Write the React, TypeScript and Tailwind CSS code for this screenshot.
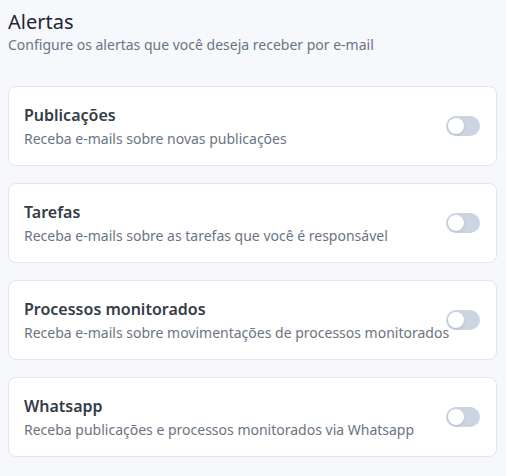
import { useState } from 'react';

interface Alert {
  id: string;
  title: string;
  description: string;
}

const alerts: Alert[] = [
  { id: 'publicacoes', title: 'Publicações', description: 'Receba e-mails sobre novas publicações' },
  { id: 'tarefas', title: 'Tarefas', description: 'Receba e-mails sobre as tarefas que você é responsável' },
  { id: 'processos', title: 'Processos monitorados', description: 'Receba e-mails sobre movimentações de processos monitorados' },
  { id: 'whatsapp', title: 'Whatsapp', description: 'Receba publicações e processos monitorados via Whatsapp' },
];

function Toggle({ checked, onChange }: { checked: boolean; onChange: () => void }) {
  return (
    <button
      type="button"
      onClick={onChange}
      className={`relative z-10 flex h-5 w-[34px] shrink-0 items-center rounded-full ${checked ? 'bg-[#3b82f6]' : 'bg-[#cbd5e1]'}`}
    >
      <span
        className={`h-4 w-4 rounded-full bg-white shadow-sm ${checked ? 'ml-4' : 'ml-[2px]'}`}
      />
    </button>
  );
}

export default function App() {
  const [enabled, setEnabled] = useState<Record<string, boolean>>({});

  return (
    <div className="min-h-[476px] bg-[#f6f8fb] pl-2 pr-[9px] pt-2 pb-4 font-['Noto_Sans',sans-serif]">
      <h1 className="text-[20px] leading-[27px] text-[#1e2633]">Alertas</h1>
      <p className="text-sm leading-5 text-[#6b7482]">Configure os alertas que você deseja receber por e-mail</p>

      <div className="mt-[31px] flex flex-col gap-[17px]">
        {alerts.map((alert) => (
          <div
            key={alert.id}
            className="flex items-center justify-between rounded-lg border border-[#e3e6ea] bg-white py-4 pl-[15px] pr-4"
          >
            <div className="min-w-0 whitespace-nowrap">
              <h3 className="text-base font-semibold leading-6 text-[#353c46]">{alert.title}</h3>
              <p className="mt-0.5 text-sm leading-5 text-[#6b7482]">{alert.description}</p>
            </div>
            <Toggle
              checked={!!enabled[alert.id]}
              onChange={() => setEnabled((prev) => ({ ...prev, [alert.id]: !prev[alert.id] }))}
            />
          </div>
        ))}
      </div>
    </div>
  );
}
